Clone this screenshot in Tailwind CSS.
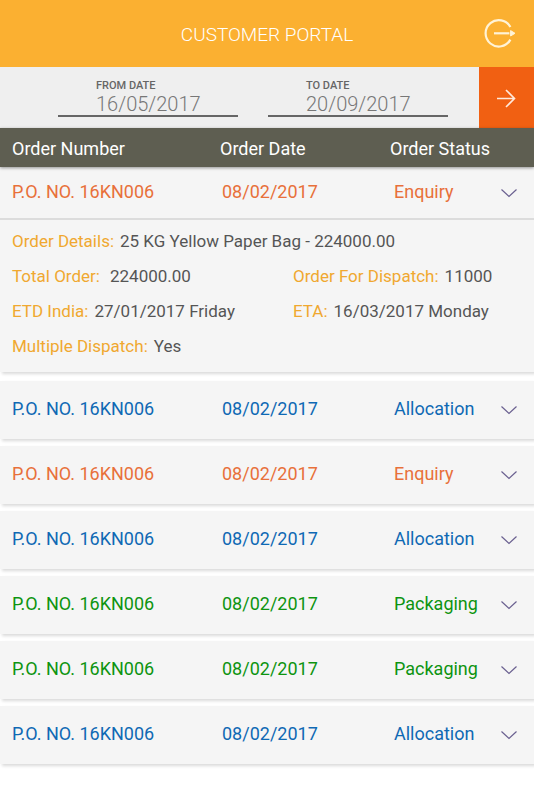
<!DOCTYPE html>
<html lang="en">
<head>
  <meta charset="UTF-8" />
  <meta name="viewport" content="width=device-width, initial-scale=1.0"/>
  <title>Customer Portal</title>
  <script src="https://cdn.jsdelivr.net/npm/@tailwindcss/browser@4"></script>
</head>
<body class="bg-white min-h-screen font-['Roboto',sans-serif] text-lg leading-6 text-[#555555]">
  <!-- Header -->
  <header class="relative bg-[#fbb031] h-[67px] pt-[3px] flex justify-center items-center">
    <h1 class="text-[19px] font-light text-white">CUSTOMER PORTAL</h1>
    <button type="button" aria-label="Log out" class="absolute right-[18px] top-[18px] text-[#fff3d6]">
      <svg class="w-8 h-8" viewBox="0 0 32 32" fill="none" stroke="currentColor" stroke-width="2.2">
        <path d="M26.4 9A13.2 13.2 0 1 0 26.4 21.6" />
        <path d="M10 15.3H25.4" />
        <path d="M26.6 12.6L31 15.3L26.6 18Z" fill="currentColor" stroke-width="1" stroke-linejoin="round" />
      </svg>
    </button>
  </header>

  <!-- Date filter -->
  <form class="bg-[#efefef] flex h-[61px]" onsubmit="return false">
    <div class="flex-1 grid grid-cols-2 gap-[30px] pl-[58px] pr-[31px] pt-3">
      <div>
        <label for="from" class="block pl-[38px] text-[11px] leading-[14px] font-medium text-[#666666]">FROM DATE</label>
        <input id="from" type="text" value="16/05/2017" class="block w-full h-6 pl-[38px] text-xl font-light border-b-2 border-[#666666] text-[#777777] focus:outline-none" />
      </div>
      <div>
        <label for="to" class="block pl-[38px] text-[11px] leading-[14px] font-medium text-[#666666]">TO DATE</label>
        <input id="to" type="text" value="20/09/2017" class="block w-full h-6 pl-[38px] text-xl font-light border-b-2 border-[#666666] text-[#777777] focus:outline-none" />
      </div>
    </div>
    <button type="submit" aria-label="Search" class="w-[55px] bg-[#f16012] text-[#ffe9dc] flex items-center justify-center">
      <svg class="w-5 h-5" viewBox="0 0 20 20" fill="none" stroke="currentColor" stroke-width="1.6">
        <path d="M0 10.5H17.5M9 2L17.5 10.5L9 19" />
      </svg>
    </button>
  </form>

  <!-- Orders -->
  <table class="block">
    <thead class="block relative bg-[#5e5e51] text-white shadow-[0_1px_3px_rgba(0,0,0,0.4)]">
      <tr class="grid grid-cols-[208fr_170fr_127fr] items-center h-[39px] pl-3 pr-[17px] pt-[3px] text-left">
        <th class="font-normal">Order Number</th>
        <th class="font-normal">Order Date</th>
        <th class="font-normal">Order Status</th>
      </tr>
    </thead>
    <tbody class="block bg-[#f5f5f5] mb-[9px] shadow-[2px_2px_3px_rgba(0,0,0,0.15)]">
      <tr class="grid grid-cols-[210fr_172fr_107fr_16px] items-center h-[53px] pl-3 pr-[17px] pb-[2px] border-b-2 border-[#dcdcdc] text-[#e8703a]">
        <td>P.O. NO. 16KN006</td>
        <td>08/02/2017</td>
        <td>Enquiry</td>
        <td><button type="button" aria-label="Hide details" class="block pt-[2px] text-[#6a6090]"><svg class="w-4 h-4" viewBox="0 0 16 16" fill="none" stroke="currentColor" stroke-width="1.2"><path d="M0.5 4.5L8 11.5L15.5 4.5" /></svg></button></td>
      </tr>
      <tr class="block text-[17px]">
        <td class="block pl-3 pt-[9px] pb-[14px]">
          <dl class="grid grid-cols-[281fr_241fr] gap-y-[11px]">
            <div class="col-span-2 flex gap-[6px]"><dt class="text-[#f0a830]">Order Details:</dt><dd>25 KG Yellow Paper Bag - 224000.00</dd></div>
            <div class="flex gap-[10px]"><dt class="text-[#f0a830]">Total Order:</dt><dd>224000.00</dd></div>
            <div class="flex gap-[6px]"><dt class="text-[#f0a830]">Order For Dispatch:</dt><dd>11000</dd></div>
            <div class="flex gap-[6px]"><dt class="text-[#f0a830]">ETD India:</dt><dd>27/01/2017 Friday</dd></div>
            <div class="flex gap-[6px]"><dt class="text-[#f0a830]">ETA:</dt><dd>16/03/2017 Monday</dd></div>
            <div class="flex gap-[6px]"><dt class="text-[#f0a830]">Multiple Dispatch:</dt><dd>Yes</dd></div>
          </dl>
        </td>
      </tr>
    </tbody>
    <tbody class="block bg-[#f5f5f5] mb-[7px] shadow-[2px_2px_3px_rgba(0,0,0,0.15)]">
      <tr class="grid grid-cols-[210fr_172fr_107fr_16px] items-center h-[58px] pl-3 pr-[17px] pb-[2px] text-[#0f69b4]">
        <td>P.O. NO. 16KN006</td>
        <td>08/02/2017</td>
        <td>Allocation</td>
        <td><button type="button" aria-label="Show details" class="block pt-[2px] text-[#6a6090]"><svg class="w-4 h-4" viewBox="0 0 16 16" fill="none" stroke="currentColor" stroke-width="1.2"><path d="M0.5 4.5L8 11.5L15.5 4.5" /></svg></button></td>
      </tr>
    </tbody>
    <tbody class="block bg-[#f5f5f5] mb-[7px] shadow-[2px_2px_3px_rgba(0,0,0,0.15)]">
      <tr class="grid grid-cols-[210fr_172fr_107fr_16px] items-center h-[58px] pl-3 pr-[17px] pb-[2px] text-[#e8703a]">
        <td>P.O. NO. 16KN006</td>
        <td>08/02/2017</td>
        <td>Enquiry</td>
        <td><button type="button" aria-label="Show details" class="block pt-[2px] text-[#6a6090]"><svg class="w-4 h-4" viewBox="0 0 16 16" fill="none" stroke="currentColor" stroke-width="1.2"><path d="M0.5 4.5L8 11.5L15.5 4.5" /></svg></button></td>
      </tr>
    </tbody>
    <tbody class="block bg-[#f5f5f5] mb-[7px] shadow-[2px_2px_3px_rgba(0,0,0,0.15)]">
      <tr class="grid grid-cols-[210fr_172fr_107fr_16px] items-center h-[58px] pl-3 pr-[17px] pb-[2px] text-[#0f69b4]">
        <td>P.O. NO. 16KN006</td>
        <td>08/02/2017</td>
        <td>Allocation</td>
        <td><button type="button" aria-label="Show details" class="block pt-[2px] text-[#6a6090]"><svg class="w-4 h-4" viewBox="0 0 16 16" fill="none" stroke="currentColor" stroke-width="1.2"><path d="M0.5 4.5L8 11.5L15.5 4.5" /></svg></button></td>
      </tr>
    </tbody>
    <tbody class="block bg-[#f5f5f5] mb-[7px] shadow-[2px_2px_3px_rgba(0,0,0,0.15)]">
      <tr class="grid grid-cols-[210fr_172fr_107fr_16px] items-center h-[58px] pl-3 pr-[17px] pb-[2px] text-[#0d9410]">
        <td>P.O. NO. 16KN006</td>
        <td>08/02/2017</td>
        <td>Packaging</td>
        <td><button type="button" aria-label="Show details" class="block pt-[2px] text-[#6a6090]"><svg class="w-4 h-4" viewBox="0 0 16 16" fill="none" stroke="currentColor" stroke-width="1.2"><path d="M0.5 4.5L8 11.5L15.5 4.5" /></svg></button></td>
      </tr>
    </tbody>
    <tbody class="block bg-[#f5f5f5] mb-[7px] shadow-[2px_2px_3px_rgba(0,0,0,0.15)]">
      <tr class="grid grid-cols-[210fr_172fr_107fr_16px] items-center h-[58px] pl-3 pr-[17px] pb-[2px] text-[#0d9410]">
        <td>P.O. NO. 16KN006</td>
        <td>08/02/2017</td>
        <td>Packaging</td>
        <td><button type="button" aria-label="Show details" class="block pt-[2px] text-[#6a6090]"><svg class="w-4 h-4" viewBox="0 0 16 16" fill="none" stroke="currentColor" stroke-width="1.2"><path d="M0.5 4.5L8 11.5L15.5 4.5" /></svg></button></td>
      </tr>
    </tbody>
    <tbody class="block bg-[#f5f5f5] shadow-[2px_2px_3px_rgba(0,0,0,0.15)]">
      <tr class="grid grid-cols-[210fr_172fr_107fr_16px] items-center h-[58px] pl-3 pr-[17px] pb-[2px] text-[#0f69b4]">
        <td>P.O. NO. 16KN006</td>
        <td>08/02/2017</td>
        <td>Allocation</td>
        <td><button type="button" aria-label="Show details" class="block pt-[2px] text-[#6a6090]"><svg class="w-4 h-4" viewBox="0 0 16 16" fill="none" stroke="currentColor" stroke-width="1.2"><path d="M0.5 4.5L8 11.5L15.5 4.5" /></svg></button></td>
      </tr>
    </tbody>
  </table>
</body>
</html>
